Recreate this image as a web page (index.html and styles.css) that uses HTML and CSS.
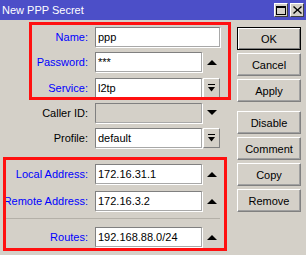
FILE: index.html
```html
<!DOCTYPE html>
<html lang="en">
<head>
    <meta charset="UTF-8">
    <title>New PPP Secret</title>
    <link rel="stylesheet" href="styles.css">
</head>
<body>
    <div class="window">
        <div class="titlebar">
            <span class="title">New PPP Secret</span>
            <div class="title-buttons">
                <span class="title-btn">
                    <svg width="10" height="9" viewBox="0 0 10 9"><rect x="0.5" y="0.5" width="9" height="8" fill="none" stroke="#000"/><rect x="0" y="0" width="10" height="2" fill="#000"/></svg>
                </span>
                <span class="title-btn">
                    <svg width="9" height="8" viewBox="0 0 9 8"><path d="M1 0 L4.5 3.2 L8 0 L9 1 L5.6 4 L9 7 L8 8 L4.5 4.8 L1 8 L0 7 L3.4 4 L0 1 Z" fill="#000"/></svg>
                </span>
            </div>
        </div>

        <div class="content">
            <div class="form">
                <div class="group group-main">
                    <div class="row">
                        <label class="label required">Name:</label>
                        <div class="field wide">ppp</div>
                    </div>
                    <div class="row">
                        <label class="label required">Password:</label>
                        <div class="field">***</div>
                        <span class="arrow up"></span>
                    </div>
                    <div class="row">
                        <label class="label required">Service:</label>
                        <div class="field">l2tp</div>
                        <span class="drop"><svg width="7" height="8" viewBox="0 0 7 8"><rect x="0" y="0" width="7" height="1" fill="#000"/><path d="M0 3 H7 L3.5 7.5 Z" fill="#000"/></svg></span>
                    </div>
                    <div class="row">
                        <label class="label">Caller ID:</label>
                        <div class="field disabled"></div>
                        <span class="arrow down"></span>
                    </div>
                    <div class="row">
                        <label class="label">Profile:</label>
                        <div class="field">default</div>
                        <span class="drop"><svg width="7" height="8" viewBox="0 0 7 8"><rect x="0" y="0" width="7" height="1" fill="#000"/><path d="M0 3 H7 L3.5 7.5 Z" fill="#000"/></svg></span>
                    </div>
                </div>

                <div class="group group-addr">
                    <div class="row">
                        <label class="label required">Local Address:</label>
                        <div class="field">172.16.31.1</div>
                        <span class="arrow up"></span>
                    </div>
                    <div class="row">
                        <label class="label required">Remote Address:</label>
                        <div class="field">172.16.3.2</div>
                        <span class="arrow up"></span>
                    </div>
                    <div class="separator"></div>
                    <div class="row">
                        <label class="label required">Routes:</label>
                        <div class="field">192.168.88.0/24</div>
                        <span class="arrow up"></span>
                    </div>
                </div>
            </div>

            <div class="actions">
                <button class="btn default">OK</button>
                <button class="btn">Cancel</button>
                <button class="btn">Apply</button>
                <button class="btn spaced">Disable</button>
                <button class="btn">Comment</button>
                <button class="btn">Copy</button>
                <button class="btn">Remove</button>
            </div>
        </div>

        <!-- highlight marks -->
        <div class="mark mark-top"></div>
        <div class="mark mark-addr"></div>
    </div>
</body>
</html>
```

FILE: styles.css
```css
body {
    margin: 0;
    font-family: 'Liberation Sans', Arial, sans-serif;
    font-size: 11px;
    color: #000000;
    background-color: #d4d0c8;
}

.window {
    position: relative;
    width: 306px;
    height: 255px;
    overflow: hidden;
}

.titlebar {
    display: flex;
    justify-content: space-between;
    align-items: center;
    height: 20px;
    background-color: #4c4fc8;
    padding: 0 2px;
}

.title {
    color: #ffffff;
    font-size: 11px;
}

.title-buttons {
    display: flex;
    gap: 2px;
}

.title-btn {
    display: flex;
    justify-content: center;
    align-items: center;
    width: 12px;
    height: 12px;
    background-color: #d4d0c8;
    border: 1px solid;
    border-color: #ffffff #404040 #404040 #ffffff;
}

.content {
    display: flex;
    gap: 17px;
    padding-top: 7px;
}

.form {
    width: 220px;
}

.group {
    display: flex;
    flex-direction: column;
    gap: 5.25px;
}

.group-addr {
    margin-top: 16px;
    gap: 7px;
}

.row {
    display: grid;
    grid-template-columns: 95px 108px 17px;
    align-items: center;
    height: 20px;
}

.label {
    text-align: right;
    padding-right: 7px;
    white-space: nowrap;
}

.label.required {
    color: #0000ff;
}

.field {
    box-sizing: border-box;
    width: 107px;
    height: 20px;
    padding: 0 2px;
    line-height: 18px;
    background-color: #ffffff;
    border: 1px solid;
    border-color: #808080 #a8a8a8 #a8a8a8 #808080;
    box-shadow: 1px 1px 0 #ffffff;
    white-space: nowrap;
    overflow: hidden;
}

.field.wide {
    width: 125px;
    grid-column: span 2;
}

.field.disabled {
    background-color: #d4d0c8;
}

.arrow {
    justify-self: center;
    width: 0;
    height: 0;
    border-left: 5px solid transparent;
    border-right: 5px solid transparent;
}

.arrow.up {
    border-bottom: 5px solid #000000;
}

.arrow.down {
    border-top: 5px solid #000000;
}

.drop {
    box-sizing: border-box;
    display: flex;
    justify-content: center;
    align-items: center;
    width: 17px;
    height: 20px;
    background-color: #d4d0c8;
    border: 1px solid;
    border-color: #ffffff #808080 #808080 #ffffff;
    box-shadow: 0 0 0 0 transparent;
}

.separator {
    height: 1px;
    margin: 0 0 1px 5px;
    background-color: #b4b0a8;
}

.actions {
    display: flex;
    flex-direction: column;
    gap: 3px;
    width: 64px;
}

.btn {
    box-sizing: border-box;
    height: 23px;
    padding: 0;
    font-family: inherit;
    font-size: 11px;
    color: #000000;
    background-color: #d4d0c8;
    border: 1px solid;
    border-color: #ffffff #808080 #808080 #ffffff;
    box-shadow: inset -1px -1px 0 #a0a0a0, 0 0 0 0 transparent;
}

.btn.default {
    border: 1px solid #000000;
    box-shadow: inset 1px 1px 0 #ffffff, inset -1px -1px 0 #808080;
}

.btn.spaced {
    margin-top: 6px;
}

.mark {
    position: absolute;
    border: 3px solid #ff1010;
    pointer-events: none;
}

.mark-top {
    left: 29px;
    top: 22px;
    width: 196px;
    height: 72px;
}

.mark-addr {
    left: 3px;
    top: 157px;
    width: 218px;
    height: 88px;
}
```
